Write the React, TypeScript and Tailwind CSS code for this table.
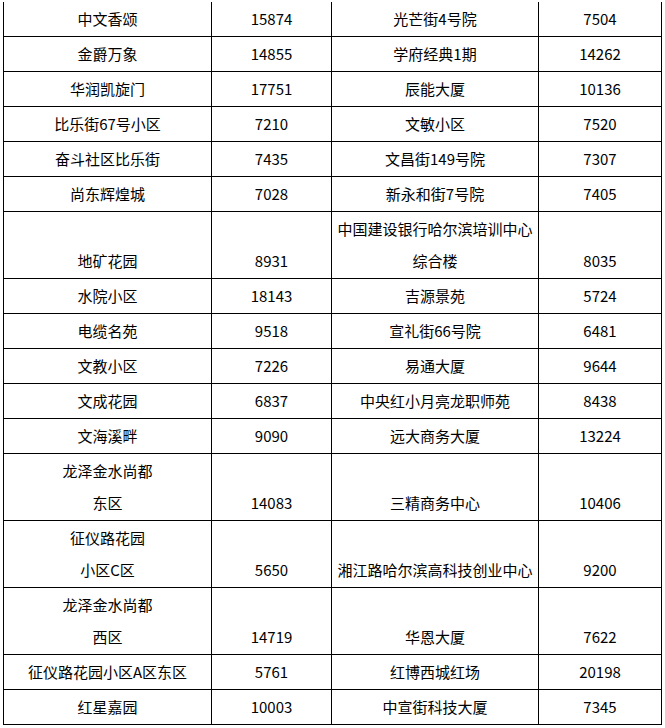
type Row = {
  a: string[];
  b: string;
  c: string[];
  d: string;
};

const rows: Row[] = [
  { a: ['中文香颂'], b: '15874', c: ['光芒街4号院'], d: '7504' },
  { a: ['金爵万象'], b: '14855', c: ['学府经典1期'], d: '14262' },
  { a: ['华润凯旋门'], b: '17751', c: ['辰能大厦'], d: '10136' },
  { a: ['比乐街67号小区'], b: '7210', c: ['文敏小区'], d: '7520' },
  { a: ['奋斗社区比乐街'], b: '7435', c: ['文昌街149号院'], d: '7307' },
  { a: ['尚东辉煌城'], b: '7028', c: ['新永和街7号院'], d: '7405' },
  { a: ['', '地矿花园'], b: '8931', c: ['中国建设银行哈尔滨培训中心', '综合楼'], d: '8035' },
  { a: ['水院小区'], b: '18143', c: ['吉源景苑'], d: '5724' },
  { a: ['电缆名苑'], b: '9518', c: ['宣礼街66号院'], d: '6481' },
  { a: ['文教小区'], b: '7226', c: ['易通大厦'], d: '9644' },
  { a: ['文成花园'], b: '6837', c: ['中央红小月亮龙职师苑'], d: '8438' },
  { a: ['文海溪畔'], b: '9090', c: ['远大商务大厦'], d: '13224' },
  { a: ['龙泽金水尚都', '东区'], b: '14083', c: ['', '三精商务中心'], d: '10406' },
  { a: ['征仪路花园', '小区C区'], b: '5650', c: ['', '湘江路哈尔滨高科技创业中心'], d: '9200' },
  { a: ['龙泽金水尚都', '西区'], b: '14719', c: ['', '华恩大厦'], d: '7622' },
  { a: ['征仪路花园小区A区东区'], b: '5761', c: ['红博西城红场'], d: '20198' },
  { a: ['红星嘉园'], b: '10003', c: ['中宣街科技大厦'], d: '7345' },
];

function Lines({ lines }: { lines: string[] }) {
  return (
    <>
      {lines.map((l, i) => (
        <div key={i} className="h-[32px] whitespace-nowrap">
          {l}
        </div>
      ))}
    </>
  );
}

export default function App() {
  const cell = 'border border-black px-0 py-px text-center align-bottom leading-[32px]';
  return (
    <div
      className="w-[665px] h-[728px] bg-white overflow-hidden pt-[2px] text-black text-[15px]"
      style={{ fontFamily: '"Noto Sans CJK SC", "Liberation Sans", sans-serif' }}
    >
      <table className="ml-[3px] w-[658px] table-fixed border-collapse">
        <colgroup>
          <col className="w-[208px]" />
          <col className="w-[120px]" />
          <col className="w-[207px]" />
          <col className="w-[123px]" />
        </colgroup>
        <tbody>
          {rows.map((r, i) => (
            <tr key={i}>
              <td className={`${cell} ${i === 0 ? 'border-t-0' : ''}`}>
                <Lines lines={r.a} />
              </td>
              <td className={`${cell} ${i === 0 ? 'border-t-0' : ''}`}>{r.b}</td>
              <td className={`${cell} ${i === 0 ? 'border-t-0' : ''}`}>
                <Lines lines={r.c} />
              </td>
              <td className={`${cell} ${i === 0 ? 'border-t-0' : ''}`}>{r.d}</td>
            </tr>
          ))}
        </tbody>
      </table>
    </div>
  );
}
